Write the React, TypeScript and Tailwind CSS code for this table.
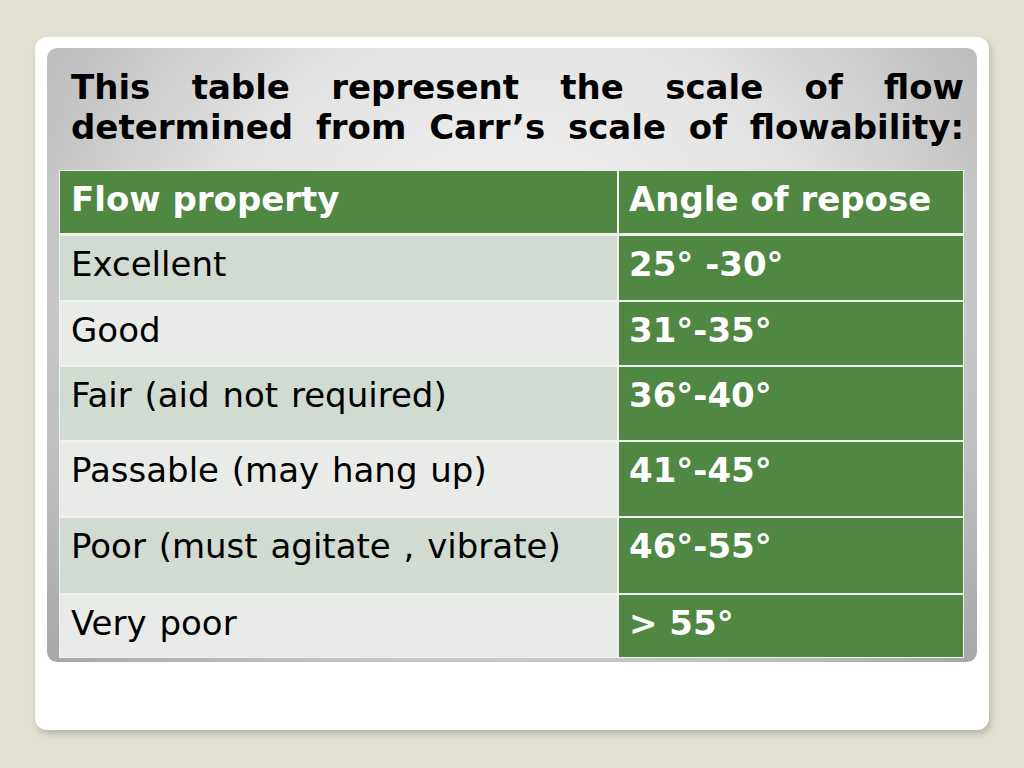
import React from "react";

const rows: { name: string; angle: string; h: string; shade: string }[] = [
  { name: "Excellent", angle: "25° -30°", h: "h-[64px]", shade: "bg-[#d1dbd2]" },
  { name: "Good", angle: "31°-35°", h: "h-[63px]", shade: "bg-[#e9ebe8]" },
  { name: "Fair (aid not required)", angle: "36°-40°", h: "h-[73px]", shade: "bg-[#d1dbd2]" },
  { name: "Passable (may hang up)", angle: "41°-45°", h: "h-[74px]", shade: "bg-[#e9ebe8]" },
  { name: "Poor (must agitate , vibrate)", angle: "46°-55°", h: "h-[75px]", shade: "bg-[#d1dbd2]" },
  { name: "Very poor", angle: "> 55°", h: "h-[62px]", shade: "bg-[#e9ebe8]" },
];

export default function App() {
  return (
    <div
      className="w-[1024px] h-[768px] bg-[#e3dfd4] pt-[37px] pl-[35px]"
      style={{ fontFamily: '"DejaVu Sans", Verdana, sans-serif' }}
    >
      <div className="w-[954px] h-[693px] bg-white rounded-[12px] shadow-[2px_4px_6px_rgba(0,0,0,0.18)] pt-[11px] pl-[12px]">
        <div className="w-[930px] h-[614px] rounded-[10px] bg-[radial-gradient(ellipse_at_50%_35%,#f4f4f4_0%,#e2e2e2_45%,#a6a6a6_100%)] pt-[19px] pl-[12px]">
          <div className="w-[893px] ml-[12px] text-[34px] leading-[40px] font-bold text-black">
            <p className="text-justify [text-align-last:justify]">This table represent the scale of flow</p>
            <p className="text-justify [text-align-last:justify]">determined from Carr’s scale of flowability:</p>
          </div>
          <div className="mt-[23px] w-[905px] bg-[#eef3eb] p-[1px] flex flex-col gap-[2px] text-[34px] leading-[40px]">
            <div className="flex gap-[2px] h-[62px] mb-[1px]">
              <div className="w-[557px] bg-[#508742] text-white font-bold pl-[11px] pt-[8px]">Flow property</div>
              <div className="flex-1 bg-[#508742] text-white font-bold pl-[10px] pt-[8px]">Angle of repose</div>
            </div>
            {rows.map((r) => (
              <div key={r.name} className={`flex gap-[2px] ${r.h}`}>
                <div className={`w-[557px] ${r.shade} text-black pl-[11px] pt-[8px] [word-spacing:2px]`}>{r.name}</div>
                <div className="flex-1 bg-[#508742] text-white font-bold pl-[10px] pt-[8px]">{r.angle}</div>
              </div>
            ))}
          </div>
        </div>
      </div>
    </div>
  );
}
